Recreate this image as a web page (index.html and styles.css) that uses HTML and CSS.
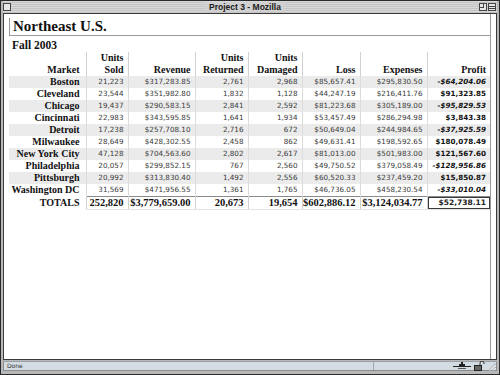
FILE: index.html
```
<!DOCTYPE html>
<html>
<head>
<meta charset="utf-8">
<link rel="stylesheet" href="styles.css">
</head>
<body>
<div class="window">
  <div class="titlebar">
    <svg class="tb-btn" width="8" height="8" viewBox="0 0 8 8"><rect x="0.5" y="0.5" width="7" height="7" fill="#e6e6e6" stroke="#444"/></svg>
    <div class="title"><span>Project 3 - Mozilla</span></div>
    <svg class="tb-btn" width="8" height="8" viewBox="0 0 8 8"><rect x="0.5" y="0.5" width="7" height="7" fill="#e6e6e6" stroke="#444"/><rect x="0.5" y="0.5" width="4" height="4" fill="none" stroke="#444"/></svg>
    <svg class="tb-btn" width="8" height="8" viewBox="0 0 8 8"><rect x="0.5" y="0.5" width="7" height="7" fill="#e6e6e6" stroke="#444"/><line x1="1" y1="3.5" x2="7" y2="3.5" stroke="#444"/><line x1="1" y1="5.5" x2="7" y2="5.5" stroke="#444"/></svg>
  </div>
  <div class="viewport">
    <div class="page">
      <h1 class="region">Northeast U.S.</h1>
      <h2 class="season">Fall 2003</h2>
      <table class="report">
        <colgroup>
          <col class="c-market"><col class="c-sold"><col class="c-rev"><col class="c-ret"><col class="c-dam"><col class="c-loss"><col class="c-exp"><col class="c-profit">
        </colgroup>
        <thead>
          <tr>
            <th class="first">Market</th>
            <th>Units<br>Sold</th>
            <th>Revenue</th>
            <th>Units<br>Returned</th>
            <th>Units<br>Damaged</th>
            <th>Loss</th>
            <th>Expenses</th>
            <th>Profit</th>
          </tr>
        </thead>
        <tbody>
          <tr class="shade"><th>Boston</th><td>21,223</td><td>$317,283.85</td><td>2,761</td><td>2,968</td><td>$85,657.41</td><td>$295,830.50</td><td class="profit neg">-$64,204.06</td></tr>
          <tr><th>Cleveland</th><td>23,544</td><td>$351,982.80</td><td>1,832</td><td>1,128</td><td>$44,247.19</td><td>$216,411.76</td><td class="profit">$91,323.85</td></tr>
          <tr class="shade"><th>Chicago</th><td>19,437</td><td>$290,583.15</td><td>2,841</td><td>2,592</td><td>$81,223.68</td><td>$305,189.00</td><td class="profit neg">-$95,829.53</td></tr>
          <tr><th>Cincinnati</th><td>22,983</td><td>$343,595.85</td><td>1,641</td><td>1,934</td><td>$53,457.49</td><td>$286,294.98</td><td class="profit">$3,843.38</td></tr>
          <tr class="shade"><th>Detroit</th><td>17,238</td><td>$257,708.10</td><td>2,716</td><td>672</td><td>$50,649.04</td><td>$244,984.65</td><td class="profit neg">-$37,925.59</td></tr>
          <tr><th>Milwaukee</th><td>28,649</td><td>$428,302.55</td><td>2,458</td><td>862</td><td>$49,631.41</td><td>$198,592.65</td><td class="profit">$180,078.49</td></tr>
          <tr class="shade"><th>New York City</th><td>47,128</td><td>$704,563.60</td><td>2,802</td><td>2,617</td><td>$81,013.00</td><td>$501,983.00</td><td class="profit">$121,567.60</td></tr>
          <tr><th>Philadelphia</th><td>20,057</td><td>$299,852.15</td><td>767</td><td>2,560</td><td>$49,750.52</td><td>$379,058.49</td><td class="profit neg">-$128,956.86</td></tr>
          <tr class="shade"><th>Pittsburgh</th><td>20,992</td><td>$313,830.40</td><td>1,492</td><td>2,556</td><td>$60,520.33</td><td>$237,459.20</td><td class="profit">$15,850.87</td></tr>
          <tr><th>Washington DC</th><td>31,569</td><td>$471,956.55</td><td>1,361</td><td>1,765</td><td>$46,736.05</td><td>$458,230.54</td><td class="profit neg">-$33,010.04</td></tr>
        </tbody>
        <tfoot>
          <tr><th>TOTALS</th><td>252,820</td><td>$3,779,659.00</td><td>20,673</td><td>19,654</td><td>$602,886.12</td><td>$3,124,034.77</td><td class="grand">$52,738.11</td></tr>
        </tfoot>
      </table>
    </div>
  </div>
  <div class="statusbar">
    <span class="status-text">Done</span>
    <span class="status-sep"></span>
    <svg class="st-net" width="18" height="8" viewBox="0 0 18 8"><line x1="0" y1="4.5" x2="18" y2="4.5" stroke="#222" stroke-width="1"/><rect x="6" y="2" width="6" height="3" fill="#222"/><rect x="8" y="0" width="2" height="3" fill="#222"/><line x1="5" y1="6.5" x2="13" y2="6.5" stroke="#555"/></svg>
    <svg class="st-lock" width="11" height="10" viewBox="0 0 11 10"><path d="M6 4 V2 a2 2 0 0 1 4 0 V3" fill="none" stroke="#333" stroke-width="1"/><rect x="0.5" y="4.5" width="7" height="5" fill="#666" stroke="#222"/></svg>
    <svg class="st-grip" width="9" height="9" viewBox="0 0 9 9"><line x1="2" y1="8.5" x2="8.5" y2="2" stroke="#999"/><line x1="5" y1="8.5" x2="8.5" y2="5" stroke="#999"/><line x1="3" y1="8.5" x2="8.5" y2="3" stroke="#fff"/><line x1="6" y1="8.5" x2="8.5" y2="6" stroke="#fff"/></svg>
  </div>
</div>
</body>
</html>
```
FILE: styles.css
```
html, body {
  margin: 0;
  padding: 0;
  background: #fff;
}

.window {
  box-sizing: border-box;
  width: 500px;
  height: 375px;
  border: 1px solid #2a2a2a;
  background: #b8b8b8;
  padding: 0 2px 3px 2px;
  display: flex;
  flex-direction: column;
}

.titlebar {
  height: 12px;
  flex: 0 0 12px;
  display: flex;
  align-items: center;
  gap: 1px;
  padding: 0 1px 0 0;
  background: repeating-linear-gradient(to bottom, #d8d8d8 0, #d8d8d8 1px, #c4c4c4 1px, #c4c4c4 2px);
}

.tb-btn {
  display: block;
  flex: 0 0 auto;
}

.title {
  flex: 1;
  text-align: center;
  font-family: "Liberation Sans", Arial, sans-serif;
  font-weight: bold;
  font-size: 8.5px;
  line-height: 11px;
  color: #1a1a1a;
}

.title span {
  background: #d0d0d0;
  padding: 0 4px;
}

.viewport {
  flex: 1;
  border: 1px solid #3a3a3a;
  background: #fff;
  display: flex;
  min-height: 0;
}

.page {
  width: 481px;
  padding: 4px 0 0 5px;
  border-right: 1px solid #9a9a9a;
}

.region {
  margin: 0;
  font-family: "Liberation Serif", "Times New Roman", serif;
  font-weight: bold;
  font-size: 15px;
  line-height: 17px;
  padding: 0 0 0 3px;
  border-left: 1px solid #9a9a9a;
  border-bottom: 1px solid #9a9a9a;
  color: #111;
}

.season {
  margin: 0;
  font-family: "Liberation Serif", "Times New Roman", serif;
  font-weight: bold;
  font-size: 11.5px;
  line-height: 14px;
  padding: 2px 0 0 3px;
  color: #111;
}

.report {
  border-collapse: collapse;
  table-layout: fixed;
  width: 481px;
}

.c-market { width: 77px; }
.c-sold { width: 42px; }
.c-rev { width: 67px; }
.c-ret { width: 53px; }
.c-dam { width: 54px; }
.c-loss { width: 58px; }
.c-exp { width: 67px; }
.c-profit { width: 63px; }

.report th,
.report td {
  text-align: right;
  padding: 0 4px 0 0;
  white-space: nowrap;
  overflow: hidden;
}

.report thead th {
  font-family: "Liberation Serif", "Times New Roman", serif;
  font-weight: bold;
  font-size: 10px;
  line-height: 12px;
  vertical-align: bottom;
  padding-bottom: 0;
  border-left: 1px solid #d0d0d0;
  color: #111;
}

.report thead th.first {
  border-left: none;
  padding-right: 6px;
}

.report tbody th,
.report tfoot th {
  font-family: "Liberation Serif", "Times New Roman", serif;
  font-weight: bold;
  font-size: 10px;
  line-height: 12px;
  height: 12px;
  padding-right: 6px;
  color: #111;
}

.report tbody td {
  font-family: "DejaVu Sans", Verdana, sans-serif;
  font-size: 7.2px;
  line-height: 12px;
  height: 12px;
  color: #3a3a3a;
  border-left: 1px solid #dcdcdc;
}

.report tbody tr.shade {
  background: #ebebeb;
}

.report td.profit {
  font-weight: bold;
  color: #111;
}

.report td.neg {
  font-style: italic;
}

.report tfoot td {
  font-family: "Liberation Serif", "Times New Roman", serif;
  font-weight: bold;
  font-size: 10.5px;
  line-height: 12px;
  height: 12px;
  color: #111;
  border-top: 1px solid #8a8a8a;
  border-left: 1px solid #cfcfcf;
  border-bottom: 1px solid #e4e4e4;
}

.report tfoot td.grand {
  font-family: "DejaVu Sans", Verdana, sans-serif;
  font-size: 7.5px;
  font-weight: bold;
  color: #222;
  box-shadow: inset 0 0 0 1px #3a3a3a;
}

.statusbar {
  flex: 0 0 10px;
  height: 10px;
  box-sizing: border-box;
  border: 1px solid #8c8c8c;
  border-top-color: #9aa0a8;
  background: #d3dbe3;
  display: flex;
  align-items: center;
  padding: 0 0 0 3px;
  margin-top: 1px;
}

.status-text {
  font-family: "DejaVu Sans", Verdana, sans-serif;
  font-size: 6px;
  line-height: 8px;
  color: #333;
  flex: 1;
}

.status-sep {
  align-self: stretch;
  width: 1px;
  background: #a0a8b0;
  margin-right: 79px;
}

.st-net {
  display: block;
  margin-right: 3px;
}

.st-lock {
  display: block;
  margin-right: 2px;
}

.st-grip {
  display: block;
}
```
